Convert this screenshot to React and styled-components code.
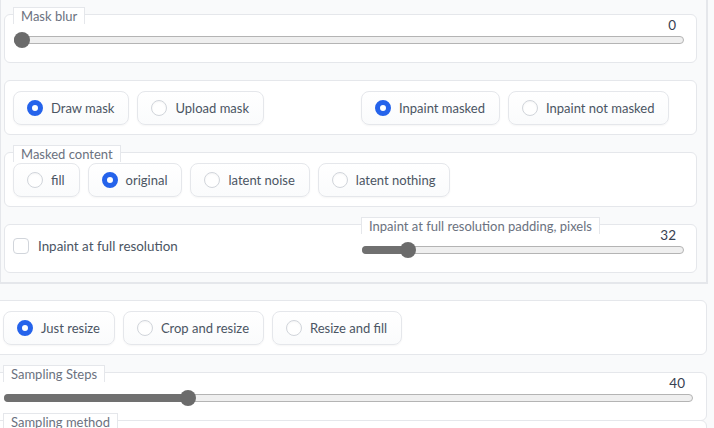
import React from 'react'
import styled, { createGlobalStyle } from 'styled-components'

const GlobalStyle = createGlobalStyle`
  html, body {
    margin: 0;
    padding: 0;
    background: #f9fafb;
  }
  body {
    font-family: Lato, "Liberation Sans", sans-serif;
    color: #374151;
    overflow: hidden;
  }
  * { box-sizing: border-box; }
`

const Page = styled.div`
  width: 714px;
  height: 428px;
  overflow: hidden;
`

const Panel = styled.div`
  width: 708px;
  border-left: 1px solid #e5e7eb;
  border-right: 2px solid #e5e7eb;
  border-bottom: 2px solid #e5e7eb;
  padding: 14px 9px 9px 3px;
  display: flex;
  flex-direction: column;
  gap: 17px;
`

const Lower = styled.div`
  width: 713px;
  margin: 16px 0 0 -6px;
  display: flex;
  flex-direction: column;
`

const Block = styled.div`
  position: relative;
  background: #fff;
  border: 1px solid #e5e7eb;
  border-radius: 6px;
  padding: ${p => p.$pad || '0 12px 0 8px'};
  margin-top: ${p => p.$mt || 0}px;
`

const Field = styled.div`
  position: relative;
  padding-top: ${p => p.$pt || 0}px;
  padding-bottom: ${p => p.$pb || 0}px;
`

const FieldLabel = styled.span`
  position: absolute;
  top: -8px;
  left: 0;
  height: 17px;
  padding: 0 7px 0 7px;
  background: #fff;
  border: 1px solid #e5e7eb;
  border-bottom: none;
  font-size: 13px;
  line-height: 16px;
  color: #6b7280;
  white-space: nowrap;
`

const Head = styled.div`
  height: 16px;
  line-height: 16px;
  font-size: 13.5px;
  text-align: right;
  padding-right: 8px;
  color: #374151;
`

const Track = styled.div`
  position: relative;
  height: 8px;
  margin: 3px 0 0 1px;
  border: 1px solid #b4b4b4;
  border-radius: 4px;
  background: #efefef;
`

const Fill = styled.div`
  position: absolute;
  left: -1px;
  top: -1px;
  bottom: -1px;
  background: #707070;
  border-radius: 4px 0 0 4px;
`

const Thumb = styled.div`
  position: absolute;
  top: 50%;
  width: 16px;
  height: 16px;
  margin: -8px 0 0 -8px;
  border-radius: 50%;
  background: #6b6b6b;
`

const Row = styled.div`
  display: flex;
  gap: 8px;
`

const Columns = styled.div`
  display: grid;
  grid-template-columns: 1fr 1fr;
  column-gap: 25px;
  align-items: start;
`

const Option = styled.label`
  display: flex;
  align-items: center;
  gap: 8px;
  height: 34px;
  padding: 0 14px 0 13px;
  border: 1px solid #e5e7eb;
  border-radius: 8px;
  background: linear-gradient(#ffffff, #fafbfc);
  box-shadow: 0 1px 2px rgba(0, 0, 0, 0.04);
  font-size: 13px;
  color: #4b5563;
  white-space: nowrap;
`

const Dot = styled.span`
  width: 16px;
  height: 16px;
  border-radius: 50%;
  background: #fff;
  border: ${p => (p.$on ? '5px solid #2563eb' : '1px solid #d1d5db')};
  box-shadow: ${p => (p.$on ? 'none' : 'inset 0 1px 2px rgba(0,0,0,0.04)')};
  flex: none;
`

const CheckRow = styled.label`
  display: flex;
  align-items: center;
  gap: 9px;
  height: 16px;
  margin-top: 13px;
  font-size: 13.4px;
  color: #4b5563;
  white-space: nowrap;
`

const Box = styled.span`
  width: 16px;
  height: 16px;
  border: 1px solid #d1d5db;
  border-radius: 4px;
  background: #fff;
  flex: none;
`

function Slider({ label, value, min, max }) {
  const pct = (value - min) / (max - min)
  const pos = `calc(7px + ${pct} * (100% - 14px))`
  return (
    <Field $pt={2} $pb={18}>
      <FieldLabel>{label}</FieldLabel>
      <Head>{value}</Head>
      <Track>
        <Fill style={{ width: pos }} />
        <Thumb style={{ left: pos }} />
      </Track>
    </Field>
  )
}

function Radios({ options, selected }) {
  return (
    <Row>
      {options.map(o => (
        <Option key={o}>
          <Dot $on={o === selected} />
          {o}
        </Option>
      ))}
    </Row>
  )
}

export default function App() {
  return (
    <Page>
      <GlobalStyle />
      <Panel>
        <Block>
          <Slider label="Mask blur" value={0} min={0} max={64} />
        </Block>

        <Block $pad="10px 12px 9px 8px">
          <Columns>
            <Radios options={['Draw mask', 'Upload mask']} selected="Draw mask" />
            <Radios options={['Inpaint masked', 'Inpaint not masked']} selected="Inpaint masked" />
          </Columns>
        </Block>

        <Block>
          <Field $pt={10} $pb={9}>
            <FieldLabel>Masked content</FieldLabel>
            <Radios
              options={['fill', 'original', 'latent noise', 'latent nothing']}
              selected="original"
            />
          </Field>
        </Block>

        <Block>
          <Columns>
            <CheckRow>
              <Box />
              Inpaint at full resolution
            </CheckRow>
            <Slider label="Inpaint at full resolution padding, pixels" value={32} min={0} max={256} />
          </Columns>
        </Block>
      </Panel>

      <Lower>
        <Block $pad="10px 13px 9px 8px">
          <Radios options={['Just resize', 'Crop and resize', 'Resize and fill']} selected="Just resize" />
        </Block>

        <Block $pad="0 13px 0 8px" $mt={17}>
          <Slider label="Sampling Steps" value={40} min={1} max={150} />
        </Block>
        <Block $pad="0 13px 0 8px" $mt={-1}>
          <Field $pb={40}>
            <FieldLabel>Sampling method</FieldLabel>
          </Field>
        </Block>
      </Lower>
    </Page>
  )
}
